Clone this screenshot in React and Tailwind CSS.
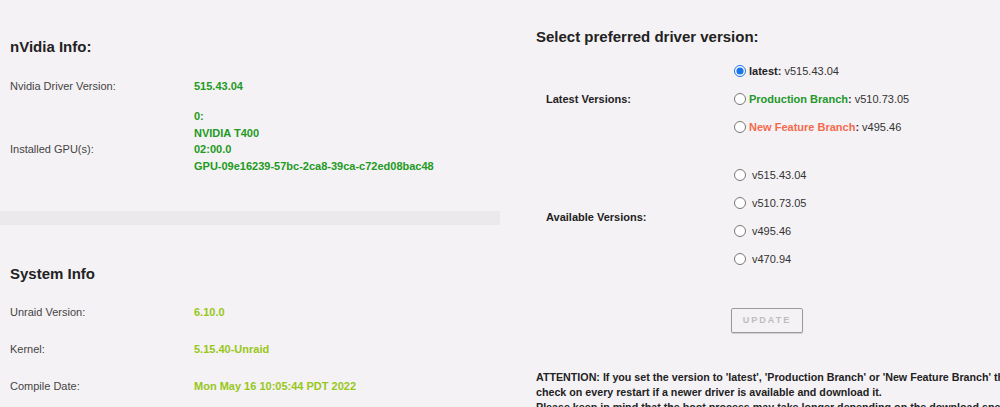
const font = { fontFamily: '"Liberation Sans", Arial, sans-serif' };

const nvidiaGpu = ["0:", "NVIDIA T400", "02:00.0", "GPU-09e16239-57bc-2ca8-39ca-c72ed08bac48", ""];

const systemRows = [
  ["Unraid Version:", "6.10.0"],
  ["Kernel:", "5.15.40-Unraid"],
  ["Compile Date:", "Mon May 16 10:05:44 PDT 2022"],
];

const latestOptions = [
  { id: "latest", name: "latest", version: "v515.43.04", color: "text-[#222]", checked: true },
  { id: "production", name: "Production Branch", version: "v510.73.05", color: "text-[#23982a]" },
  { id: "newfeature", name: "New Feature Branch", version: "v495.46", color: "text-[#f46a4e]" },
];

const availableVersions = ["v515.43.04", "v510.73.05", "v495.46", "v470.94"];

const Radio = ({ checked, name }) => (
  <input
    type="radio"
    name={name}
    defaultChecked={checked}
    className="m-0 ml-[-1px] h-[12px] w-[12px] accent-[#1a73e8]"
  />
);

const InfoRow = ({ label, children, className = "" }) => (
  <div className={`flex items-center px-[10px] ${className}`}>
    <div className="w-[184px] shrink-0 text-[11px] text-[#444]">{label}</div>
    <div className="text-[11px] font-bold">{children}</div>
  </div>
);

export default function App() {
  return (
    <div style={font} className="flex h-[407px] w-[1000px] overflow-hidden bg-[#f5f2f5] text-[#222]">
      {/* nvidia + system info */}
      <div className="w-[530px] shrink-0">
        <h2 className="mt-[37px] h-[20px] px-[10px] text-[15px] font-bold leading-[20px]">nVidia Info:</h2>
        <InfoRow label="Nvidia Driver Version:" className="mt-[14px] h-[30px]">
          <span className="text-[#229a22]">515.43.04</span>
        </InfoRow>
        <InfoRow label="Installed GPU(s):" className="mt-[7px]">
          <div className="text-[#229a22] leading-[16.5px]">
            {nvidiaGpu.map((line, i) => (
              <div key={i} className="h-[16.5px]">{line}</div>
            ))}
          </div>
        </InfoRow>
        <div className="mt-[20px] h-[14px] w-[500px] bg-[#ece9ec]" />
        <h2 className="mt-[39px] h-[20px] px-[10px] text-[15px] font-bold leading-[20px]">System Info</h2>
        <div className="mt-[10.5px]">
          {systemRows.map(([label, value]) => (
            <InfoRow key={label} label={label} className="h-[37px]">
              <span className="text-[#97c71a]">{value}</span>
            </InfoRow>
          ))}
        </div>
      </div>

      {/* driver selection */}
      <div className="ml-[6px] w-[560px] shrink-0">
        <h2 className="mt-[27px] h-[20px] text-[15px] font-bold leading-[20px]">Select preferred driver version:</h2>

        <div className="mt-[10px] flex items-center">
          <div className="w-[199px] shrink-0 pl-[10px] text-[11px] font-bold">Latest Versions:</div>
          <div>
            {latestOptions.map((opt) => (
              <label key={opt.id} className="flex h-[28px] items-center gap-[3px] text-[11px] text-[#333]">
                <Radio name="drv_version" checked={opt.checked} />
                <span>
                  <b className={opt.color}>{opt.name}</b>
                  <b>:</b> {opt.version}
                </span>
              </label>
            ))}
          </div>
        </div>

        <div className="mt-[20px] flex items-center">
          <div className="w-[199px] shrink-0 pl-[10px] text-[11px] font-bold">Available Versions:</div>
          <div>
            {availableVersions.map((v) => (
              <label key={v} className="flex h-[28px] items-center gap-[6px] text-[11px] text-[#333]">
                <Radio name="drv_version" />
                <span>{v}</span>
              </label>
            ))}
          </div>
        </div>

        <button
          disabled
          className="ml-[195px] mt-[35px] flex h-[25px] w-[72px] items-center justify-center rounded-[2px] border border-[#9a9a9a] bg-[#f5f2f5] text-[9px] font-bold tracking-[2px] text-[#bdbdbd] shadow-[0_1px_1px_rgba(0,0,0,0.15)]"
        >
          UPDATE
        </button>

        <div className="mt-[37px] whitespace-nowrap text-[10.7px] font-bold leading-[15px] text-[#222]">
          <div>ATTENTION: If you set the version to 'latest', 'Production Branch' or 'New Feature Branch' the plugin will</div>
          <div>check on every restart if a newer driver is available and download it.</div>
          <div>Please keep in mind that the boot process may take longer depending on the download speed of your connection.</div>
        </div>
      </div>
    </div>
  );
}
